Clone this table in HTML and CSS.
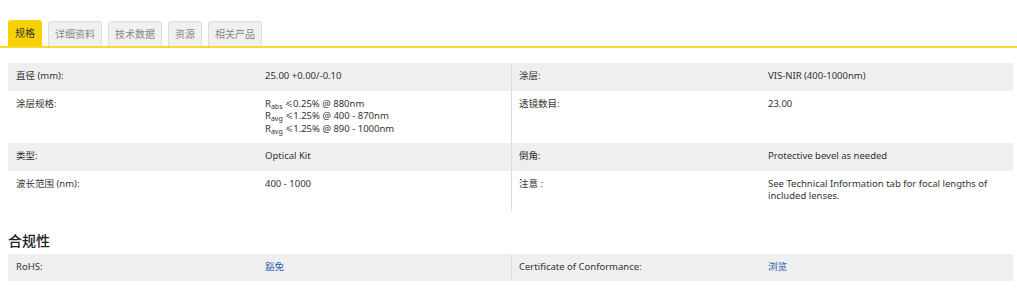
FILE: index.html
```html
<!DOCTYPE html>
<html lang="zh">
<head>
<meta charset="utf-8">
<link rel="stylesheet" href="styles.css">
</head>
<body>
<div class="tabs-wrap">
  <div class="tabs">
    <div class="tab active">规格</div>
    <div class="tab">详细资料</div>
    <div class="tab">技术数据</div>
    <div class="tab">资源</div>
    <div class="tab">相关产品</div>
  </div>
</div>
<div class="content">
  <div class="spec">
    <div class="row shade">
      <div class="c lab">直径 (mm):</div>
      <div class="c val">25.00 +0.00/-0.10</div>
      <div class="c lab div">涂层:</div>
      <div class="c val">VIS-NIR (400-1000nm)</div>
    </div>
    <div class="row">
      <div class="c lab">涂层规格:</div>
      <div class="c val">R<sub>abs</sub> <span class="le">≤</span>0.25% @ 880nm<br>R<sub>avg</sub> <span class="le">≤</span>1.25% @ 400 - 870nm<br>R<sub>avg</sub> <span class="le">≤</span>1.25% @ 890 - 1000nm</div>
      <div class="c lab div">透镜数目:</div>
      <div class="c val">23.00</div>
    </div>
    <div class="row shade">
      <div class="c lab">类型:</div>
      <div class="c val">Optical Kit</div>
      <div class="c lab div">倒角:</div>
      <div class="c val">Protective bevel as needed</div>
    </div>
    <div class="row">
      <div class="c lab">波长范围 (nm):</div>
      <div class="c val">400 - 1000</div>
      <div class="c lab div">注意 :</div>
      <div class="c val">See Technical Information tab for focal lengths of included lenses.</div>
    </div>
  </div>
  <h2 class="heading">合规性</h2>
  <div class="spec">
    <div class="row shade">
      <div class="c lab">RoHS:</div>
      <div class="c val"><a class="link">豁免</a></div>
      <div class="c lab div">Certificate of Conformance:</div>
      <div class="c val"><a class="link">浏览</a></div>
    </div>
  </div>
</div>
</body>
</html>
```
FILE: styles.css
```css
html, body {
  margin: 0;
  padding: 0;
  background: #fff;
}
body {
  font-family: "Noto Sans", "Noto Sans CJK SC", sans-serif;
  color: #333;
  font-size: 9.5px;
  width: 1017px;
  overflow: hidden;
}
.tabs-wrap {
  padding: 20px 0 0 8px;
  border-bottom: 2px solid #f6db2c;
}
.tabs {
  display: flex;
  gap: 6px;
  align-items: flex-end;
}
.tab {
  height: 24px;
  line-height: 24px;
  padding: 0 6px;
  background: #f0f0f0;
  border: 1px solid #dedede;
  border-bottom: none;
  border-radius: 3px 3px 0 0;
  color: #888;
  font-size: 10px;
}
.tab.active {
  background: #f7d200;
  border-color: #f7d200;
  color: #333;
  height: 25px;
  line-height: 25px;
}
.content {
  padding: 15px 0 0 8px;
}
.spec {
  width: 1005px;
}
.row {
  display: grid;
  grid-template-columns: 257px 246px 257px 245px;
}
.row.shade {
  background: #efefef;
}
.c {
  padding: 7px 0 8px 0;
  line-height: 12.5px;
  min-height: 12px;
}
.lab {
  padding-left: 8px;
}
.div {
  border-left: 1px solid #dcdcdc;
  padding-left: 7px;
}
.val {
  padding-right: 10px;
}
sub {
  font-size: 7px;
  vertical-align: -2px;
  line-height: 0;
}
.le {
  font-size: 8px;
}
.heading {
  margin: 21px 0 5px 0;
  font-size: 14px;
  font-weight: 500;
  color: #222;
  line-height: 17px;
}
.link {
  color: #2a5fae;
}
```
